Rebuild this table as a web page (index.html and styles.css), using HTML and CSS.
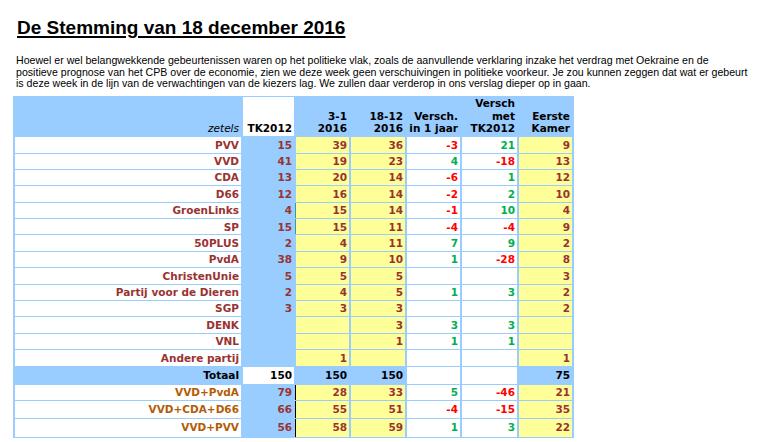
FILE: index.html
```html
<!DOCTYPE html>
<html lang="nl">
<head>
<meta charset="utf-8">
<title>De Stemming van 18 december 2016</title>
<link rel="stylesheet" href="styles.css">
</head>
<body>
<div class="page">
  <h1 class="title">De Stemming van 18 december 2016</h1>
  <p class="intro">Hoewel er wel belangwekkende gebeurtenissen waren op het politieke vlak, zoals de aanvullende verklaring inzake het verdrag met Oekraine en de<br>positieve prognose van het CPB over de economie, zien we deze week geen verschuivingen in politieke voorkeur. Je zou kunnen zeggen dat wat er gebeurt<br>is deze week in de lijn van de verwachtingen van de kiezers lag. We zullen daar verderop in ons verslag dieper op in gaan.</p>
  <table class="poll">
    <colgroup>
      <col class="c-lab"><col class="c-tk"><col class="c-a"><col class="c-b"><col class="c-c"><col class="c-d"><col class="c-e">
    </colgroup>
    <thead>
      <tr class="head">
        <th class="hb"><span class="zetels">zetels</span></th>
        <th class="hw">TK2012</th>
        <th class="hb">3-1<br>2016</th>
        <th class="hb">18-12<br>2016</th>
        <th class="hb">Versch.<br>in 1 jaar</th>
        <th class="hb">Versch<br>met<br>TK2012</th>
        <th class="hb">Eerste<br>Kamer</th>
      </tr>
    </thead>
    <tbody>
      <tr class="row"><td class="lab">PVV</td><td class="tk">15</td><td class="y">39</td><td class="y">36</td><td class="w r">-3</td><td class="w g">21</td><td class="y">9</td></tr>
      <tr class="row"><td class="lab">VVD</td><td class="tk">41</td><td class="y">19</td><td class="y">23</td><td class="w g">4</td><td class="w r">-18</td><td class="y">13</td></tr>
      <tr class="row"><td class="lab">CDA</td><td class="tk">13</td><td class="y">20</td><td class="y">14</td><td class="w r">-6</td><td class="w g">1</td><td class="y">12</td></tr>
      <tr class="row"><td class="lab">D66</td><td class="tk">12</td><td class="y">16</td><td class="y">14</td><td class="w r">-2</td><td class="w g">2</td><td class="y">10</td></tr>
      <tr class="row"><td class="lab">GroenLinks</td><td class="tk">4</td><td class="y teal">15</td><td class="y">14</td><td class="w r">-1</td><td class="w g">10</td><td class="y">4</td></tr>
      <tr class="row"><td class="lab">SP</td><td class="tk">15</td><td class="y teal">15</td><td class="y">11</td><td class="w r">-4</td><td class="w r">-4</td><td class="y">9</td></tr>
      <tr class="row"><td class="lab">50PLUS</td><td class="tk">2</td><td class="y">4</td><td class="y">11</td><td class="w g">7</td><td class="w g">9</td><td class="y">2</td></tr>
      <tr class="row"><td class="lab">PvdA</td><td class="tk">38</td><td class="y">9</td><td class="y">10</td><td class="w g">1</td><td class="w r">-28</td><td class="y">8</td></tr>
      <tr class="row"><td class="lab">ChristenUnie</td><td class="tk">5</td><td class="y">5</td><td class="y">5</td><td class="w"></td><td class="w"></td><td class="y">3</td></tr>
      <tr class="row"><td class="lab">Partij voor de Dieren</td><td class="tk">2</td><td class="y">4</td><td class="y">5</td><td class="w g">1</td><td class="w g">3</td><td class="y">2</td></tr>
      <tr class="row"><td class="lab">SGP</td><td class="tk">3</td><td class="y">3</td><td class="y">3</td><td class="w"></td><td class="w"></td><td class="y">2</td></tr>
      <tr class="row"><td class="lab">DENK</td><td class="tk"></td><td class="y"></td><td class="y">3</td><td class="w g">3</td><td class="w g">3</td><td class="y"></td></tr>
      <tr class="row"><td class="lab">VNL</td><td class="tk"></td><td class="y"></td><td class="y">1</td><td class="w g">1</td><td class="w g">1</td><td class="y"></td></tr>
      <tr class="row"><td class="lab">Andere partij</td><td class="tk"></td><td class="y">1</td><td class="y"></td><td class="w"></td><td class="w"></td><td class="y">1</td></tr>
      <tr class="total"><td class="tb">Totaal</td><td class="tw">150</td><td class="tb">150</td><td class="tb">150</td><td class="tw"></td><td class="tw"></td><td class="tb">75</td></tr>
      <tr class="combo c1"><td class="lab2">VVD+PvdA</td><td class="tk">79</td><td class="y blk">28</td><td class="y">33</td><td class="w g">5</td><td class="w r">-46</td><td class="y">21</td></tr>
      <tr class="combo c2"><td class="lab2">VVD+CDA+D66</td><td class="tk">66</td><td class="y blk">55</td><td class="y">51</td><td class="w r">-4</td><td class="w r">-15</td><td class="y">35</td></tr>
      <tr class="combo c3"><td class="lab2">VVD+PVV</td><td class="tk">56</td><td class="y blk">58</td><td class="y">59</td><td class="w g">1</td><td class="w g">3</td><td class="y">22</td></tr>
    </tbody>
  </table>
</div>
</body>
</html>
```

FILE: styles.css
```css
html, body {
  margin: 0;
  padding: 0;
  background: #ffffff;
}

.page {
  padding: 0 0 0 13px;
}

.title {
  margin: 17px 0 0 4px;
  font-family: "Liberation Sans", Arial, sans-serif;
  font-size: 19px;
  font-weight: bold;
  line-height: 22px;
  color: #000;
  text-decoration: underline;
  text-decoration-thickness: 2px;
  text-underline-offset: 2px;
}

.intro {
  margin: 16px 0 0 3px;
  font-family: "Liberation Sans", Arial, sans-serif;
  font-size: 10.6px;
  line-height: 11.7px;
  color: #000;
  white-space: nowrap;
}

.poll {
  margin-top: 6px;
  width: 561px;
  table-layout: fixed;
  border-collapse: separate;
  border-spacing: 2px 1px;
  background: #99ccff;
  font-family: "DejaVu Sans", Verdana, sans-serif;
  font-size: 10.5px;
  font-weight: bold;
  line-height: 12.5px;
}

.c-lab { width: 226px; }
.c-tk { width: 51px; }
.c-a { width: 53px; }
.c-b { width: 54px; }
.c-c { width: 53px; }
.c-d { width: 55px; }
.c-e { width: 53px; }

.poll th,
.poll td {
  padding: 0 2px 0 0;
  text-align: right;
  white-space: nowrap;
  box-sizing: border-box;
}

.head th {
  height: 39px;
  vertical-align: bottom;
  padding-bottom: 1.5px;
  color: #000;
}

.hb { background: #99ccff; }
.hw { background: #ffffff; }

.zetels {
  font-style: italic;
  font-weight: normal;
}

.row td { height: 15.4px; vertical-align: middle; }
.total td { height: 17px; vertical-align: middle; color: #000; }
.c1 td { height: 15px; }
.c2 td { height: 17px; }
.c3 td { height: 18px; }

.lab { background: #ffffff; color: #993333; }
.lab2 { background: #ffffff; color: #b35c06; }
.tk { background: #99ccff; color: #993333; }
.y { background: #ffff99; color: #993333; }
.w { background: #ffffff; }
.g { color: #00b050; }
.r { color: #ff0000; }

.tb { background: #99ccff; }
.tw { background: #ffffff; }

.teal { box-shadow: -1px 0 0 #3a9c9c; }
.blk { box-shadow: -1px 0 0 #000000; }
```
